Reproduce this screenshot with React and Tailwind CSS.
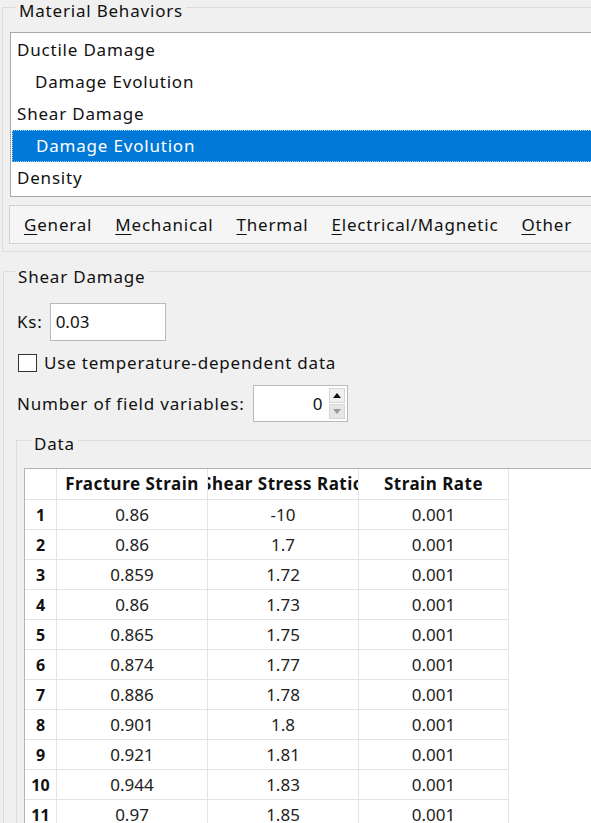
import React from 'react';

// Abaqus-style "Edit Material" dialog fragment: behaviors list, menu bar, shear damage data table

const behaviors = [
  { label: 'Ductile Damage', indent: false },
  { label: 'Damage Evolution', indent: true },
  { label: 'Shear Damage', indent: false },
  { label: 'Damage Evolution', indent: true, selected: true },
  { label: 'Density', indent: false },
];

const menus = [
  { key: 'G', rest: 'eneral' },
  { key: 'M', rest: 'echanical' },
  { key: 'T', rest: 'hermal' },
  { key: 'E', rest: 'lectrical/Magnetic' },
  { key: 'O', rest: 'ther' },
];

const rows = [
  ['0.86', '-10', '0.001'],
  ['0.86', '1.7', '0.001'],
  ['0.859', '1.72', '0.001'],
  ['0.86', '1.73', '0.001'],
  ['0.865', '1.75', '0.001'],
  ['0.874', '1.77', '0.001'],
  ['0.886', '1.78', '0.001'],
  ['0.901', '1.8', '0.001'],
  ['0.921', '1.81', '0.001'],
  ['0.944', '1.83', '0.001'],
  ['0.97', '1.85', '0.001'],
  ['1', '1.87', '0.001'],
];

function GroupTitle({ children, className = '' }) {
  return (
    <div className={`w-fit px-[3px] bg-[#f0f0f0] leading-[20px] ${className}`}>{children}</div>
  );
}

function Spinner() {
  return (
    <div className="flex items-center w-[95px] h-[37px] border border-[#b9b9b9] bg-white pl-2 pr-[2px]">
      <span className="flex-1 text-right pr-[6px] tracking-normal">0</span>
      <div className="flex flex-col gap-[1px]">
        <div className="w-[16px] h-[15px] bg-[#f0f0f0] border border-[#d6d6d6] flex items-center justify-center">
          <svg width="8" height="5" viewBox="0 0 8 5">
            <path d="M0 5 L4 0 L8 5 Z" fill="#111" />
          </svg>
        </div>
        <div className="w-[16px] h-[15px] bg-[#e6e6e6] border border-[#d6d6d6] flex items-center justify-center">
          <svg width="8" height="5" viewBox="0 0 8 5">
            <path d="M0 0 L8 0 L4 5 Z" fill="#9a9a9a" />
          </svg>
        </div>
      </div>
    </div>
  );
}

export default function App() {
  return (
    <div className="w-[591px] h-[823px] overflow-hidden bg-[#f0f0f0] text-[17px] tracking-[0.8px] text-[#111] font-['Noto_Sans',sans-serif]">
      <div className="w-[640px] pl-[2px] pt-[7px]">
        {/* Material Behaviors group */}
        <div className="border border-[#dcdcdc] pb-[7px]">
          <GroupTitle className="-mt-[7px] ml-[13px]">Material Behaviors</GroupTitle>

          <div className="mt-[11px] ml-[7px] border border-[#a8a8a8] bg-white pt-[1px] pb-[2px] px-[1px]">
            {behaviors.map((b, i) => (
              <div
                key={i}
                className={`h-[32px] flex items-center ${b.indent ? 'pl-[23px]' : 'pl-[5px]'} ${
                  b.selected
                    ? 'bg-[#0078d7] text-white border border-dotted border-[#9cc8ee]'
                    : ''
                }`}
              >
                {b.label}
              </div>
            ))}
          </div>

          <div className="mt-[8px] ml-[6px] h-[39px] border border-[#d0d0d0] bg-[#f5f5f5] flex items-center pl-[14px] gap-[23px]">
            {menus.map((m) => (
              <span key={m.key} className="whitespace-nowrap">
                <span className="underline underline-offset-[3px]">{m.key}</span>
                {m.rest}
              </span>
            ))}
          </div>
        </div>

        {/* Shear Damage group */}
        <div className="mt-[19px] ml-[1px] border border-[#dcdcdc] h-[700px]">
          <GroupTitle className="-mt-[5px] ml-[11px]">Shear Damage</GroupTitle>

          <div className="mt-[16px] flex items-center pl-[13px] gap-[7px]">
            <span>Ks:</span>
            <div className="w-[116px] h-[38px] border border-[#b9b9b9] bg-white flex items-center px-[5px] tracking-normal">
              0.03
            </div>
          </div>

          <div className="mt-[11px] flex items-center h-[22px] pl-[14px] gap-[7px]">
            <div className="w-[19px] h-[18px] border border-[#333] bg-white" />
            <span>Use temperature-dependent data</span>
          </div>

          <div className="mt-[11px] flex items-center pl-[13px] gap-[8px]">
            <span>Number of field variables:</span>
            <Spinner />
          </div>

          {/* Data group */}
          <div className="mt-[18px] ml-[12px] border border-[#dcdcdc] h-[500px]">
            <GroupTitle className="-mt-[7px] ml-[14px]">Data</GroupTitle>

            <div className="mt-[14px] ml-[7px] border border-[#b4b4b4] bg-white h-[480px]">
              <div className="grid grid-cols-[32px_151px_151px_150px] w-fit tracking-normal">
                <div className="h-[31px] border-r border-b border-[#e4e4e4]" />
                {['Fracture Strain', 'Shear Stress Ratio', 'Strain Rate'].map((h) => (
                  <div
                    key={h}
                    className="h-[31px] border-r border-b border-[#e4e4e4] flex items-center justify-center overflow-hidden whitespace-nowrap font-bold text-[17px] tracking-[0.5px]"
                  >
                    {h}
                  </div>
                ))}
                {rows.map((r, i) => (
                  <React.Fragment key={i}>
                    <div className="h-[30px] border-r border-b border-[#e4e4e4] flex items-center justify-center font-bold text-[16px]">
                      {i + 1}
                    </div>
                    {r.map((v, j) => (
                      <div
                        key={j}
                        className="h-[30px] border-r border-b border-[#e4e4e4] flex items-center justify-center text-[#222]"
                      >
                        {v}
                      </div>
                    ))}
                  </React.Fragment>
                ))}
              </div>
            </div>
          </div>
        </div>
      </div>
    </div>
  );
}
